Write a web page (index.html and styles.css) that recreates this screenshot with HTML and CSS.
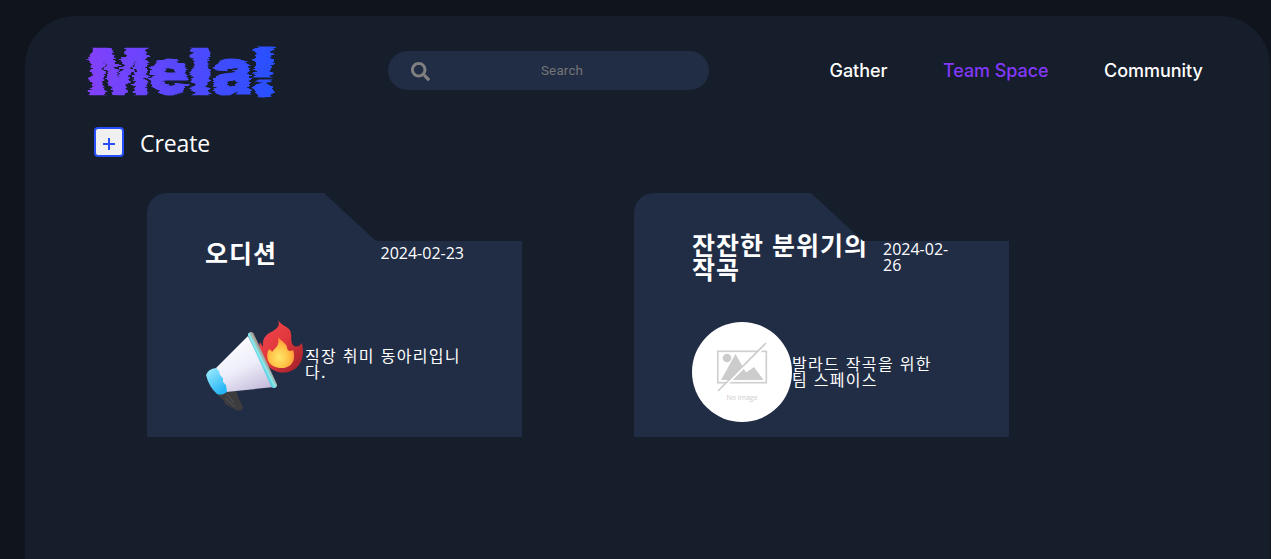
FILE: index.html
```html
<!DOCTYPE html>
<html lang="ko">
<head>
<meta charset="utf-8">
<title>Mela! Team Space</title>
<link rel="stylesheet" href="styles.css">
</head>
<body>
<main class="panel">
  <header class="header">
    <svg class="logo" viewBox="0 0 196 60" role="img" aria-label="Mela!">
      <defs>
        <linearGradient id="brand" gradientUnits="userSpaceOnUse" x1="5" y1="0" x2="190" y2="0">
          <stop offset="0" stop-color="#8540fb"/>
          <stop offset="1" stop-color="#2850ff"/>
        </linearGradient>
        <filter id="glitch" filterUnits="userSpaceOnUse" x="0" y="0" width="196" height="60" color-interpolation-filters="sRGB">
          <feTurbulence type="fractalNoise" baseFrequency="0.06 0.35" numOctaves="2" seed="3" result="n"/>
          <feColorMatrix in="n" type="matrix" values="1 0 0 0 0  0 0 0 0 0.5  0 0 0 0 0.5  0 0 0 0 1" result="m"/>
          <feDisplacementMap in="SourceGraphic" in2="m" scale="13" xChannelSelector="R" yChannelSelector="G"/>
        </filter>
      </defs>
      <g class="logo-text" filter="url(#glitch)">
        <text x="7" y="53.500" textLength="62" lengthAdjust="spacingAndGlyphs">M</text>
        <text class="round" x="68" y="53" textLength="40" lengthAdjust="spacingAndGlyphs">e</text>
        <text x="108" y="53.500" textLength="23" lengthAdjust="spacingAndGlyphs">l</text>
        <text class="round" x="131" y="53" textLength="41" lengthAdjust="spacingAndGlyphs">a</text>
        <text class="mark" x="169" y="53.500" textLength="27" lengthAdjust="spacingAndGlyphs">!</text>
      </g>
      <path class="logo-gap" d="M172 37.500H194"/>
    </svg>
    <div class="search">
      <svg class="search-icon" viewBox="0 0 512 512"><path d="M505 442.700 405.300 343c-4.500-4.500-10.600-7-17-7H372c27.600-35.300 44-79.700 44-128C416 93.100 322.900 0 208 0S0 93.100 0 208s93.100 208 208 208c48.300 0 92.700-16.400 128-44v16.300c0 6.400 2.500 12.500 7 17l99.700 99.700c9.400 9.400 24.600 9.400 33.900 0l28.300-28.300c9.400-9.400 9.400-24.600.1-34zM208 336c-70.700 0-128-57.200-128-128 0-70.700 57.200-128 128-128 70.700 0 128 57.200 128 128 0 70.700-57.200 128-128 128z"/></svg>
      <span class="search-label">Search</span>
    </div>
    <nav class="nav">
      <a>Gather</a>
      <a class="active">Team Space</a>
      <a>Community</a>
    </nav>
  </header>

  <div class="create">
    <button class="add" aria-label="Create"><svg viewBox="0 0 12 12"><path d="M6 0v12M0 6h12"/></svg></button>
    <span class="create-label">Create</span>
  </div>

  <section class="cards">
    <article class="card">
      <div class="card-head">
        <h2>오디션</h2>
        <time>2024-02-23</time>
      </div>
      <div class="card-body">
        <svg class="picture" viewBox="0 0 100 100">
          <defs>
            <linearGradient id="cone" x1="0.2" y1="0" x2="0.7" y2="1"><stop offset="0" stop-color="#fff"/><stop offset="0.55" stop-color="#eeeefa"/><stop offset="1" stop-color="#c6bddb"/></linearGradient>
            <linearGradient id="rim" gradientUnits="userSpaceOnUse" x1="54" y1="48" x2="60" y2="45"><stop offset="0" stop-color="#46c5dd"/><stop offset="0.5" stop-color="#8cebed"/><stop offset="1" stop-color="#a89a91"/></linearGradient>
            <linearGradient id="back" x1="0" y1="0" x2="0.6" y2="1"><stop offset="0" stop-color="#a5efff"/><stop offset="1" stop-color="#25b5f5"/></linearGradient>
            <linearGradient id="fire" x1="0" y1="0" x2="1" y2="1"><stop offset="0" stop-color="#f5464f"/><stop offset="0.5" stop-color="#df373c"/><stop offset="1" stop-color="#981e28"/></linearGradient>
            <radialGradient id="flame" cx="0.45" cy="0.65" r="0.6"><stop offset="0" stop-color="#ffe66a"/><stop offset="0.6" stop-color="#ffc044"/><stop offset="1" stop-color="#ff9139"/></radialGradient>
          </defs>
          <path fill="url(#fire)" d="M73 6C77 13 86 12 86 20C87 23 85 27 88 31C91 34 95 32 97 29C100 43 96 53 86 57C77 61 66 57 62 50L54 33L55 28L58 33C57 23 62 20 68 17C73 14 75 11 73 6Z"/>
          <path fill="url(#flame)" d="M73 23C76 27 81 29 82 33C82 37 85 38 88 36C91 44 88 54 77 54C66 54 60 47 63 37C64 34 66 36 67 38C70 34 75 32 73 23Z"/>
          <path fill="#3c3c3f" d="M12 80L31 76L34 85L38 93C38 96 35 98 31 96L20 90C20 86 16 85 12 80Z"/>
          <path stroke="#555458" stroke-width="1" d="M22 80L29 89M20 84L30 93"/>
          <path fill="url(#cone)" d="M11 54L43 22L69 73L21 78Z"/>
          <path fill="url(#back)" d="M1 61Q3 55 11 54L14 57L15 61L18 64L18 68L21 71L22 78Q17 82 12 80Q4 73 1 61Z"/>
          <path stroke="url(#rim)" stroke-width="6" stroke-linecap="round" d="M46 21L69 71"/>
        </svg>
        <p>직장 취미 동아리입니<br>다.</p>
      </div>
    </article>

    <article class="card card-long">
      <div class="card-head">
        <h2>잔잔한 분위기의<br>작곡</h2>
        <time>2024-02-<br>26</time>
      </div>
      <div class="card-body">
        <svg class="picture" viewBox="0 0 100 100">
          <circle cx="50" cy="50" r="50" fill="#fff"/>
          <rect x="25.800" y="29.300" width="48.500" height="31.400" fill="none" stroke="#d0d0d0" stroke-width="1.700"/>
          <circle cx="35" cy="36" r="4.300" fill="#ccc"/>
          <path fill="#ccc" d="M29 58L43.500 32L54 50.500L62 45L71.500 58Z"/>
          <path stroke="#fff" stroke-width="2.600" d="M26.800 70L75 22"/>
          <path stroke="#ccc" stroke-width="1.600" d="M26 69L74 21"/>
          <text class="no-image" x="50" y="78">No image</text>
        </svg>
        <p>발라드 작곡을 위한<br>팀 스페이스</p>
      </div>
    </article>
  </section>
</main>
</body>
</html>
```

FILE: styles.css
```css
* { box-sizing: border-box; }

body {
  margin: 0;
  height: 559px;
  padding: 16px 1px 0 25px;
  overflow: hidden;
  background: #10141c;
  color: #fff;
  font-family: "Open Sans", "Noto Sans CJK KR", sans-serif;
}

.panel {
  height: 543px;
  border-radius: 50px 50px 0 0;
  background: #161d2b;
}

.header {
  display: flex;
  align-items: center;
  height: 109px;
  padding-left: 56px;
}

.logo { width: 196px; height: 60px; }
.logo-text {
  fill: url(#brand);
  stroke: url(#brand);
  stroke-width: 0.5px;
  font: 900 64px Inter, sans-serif;
}
.logo-text .round { stroke-width: 1px; }
.logo-text .mark { stroke-width: 3px; }
.logo-gap { stroke: #161d2b; stroke-width: 2px; }

.search {
  display: flex;
  align-items: center;
  width: 321px;
  height: 39px;
  margin-left: 111px;
  padding-left: 23px;
  border-radius: 20px;
  background: #212d45;
  color: #757575;
  font: 13.33px Roboto, sans-serif;
}
.search-icon { width: 19px; height: 19px; fill: #808080; margin-top: 2px; }
.search-label { margin-left: 111px; margin-top: -1px; letter-spacing: 0.2px; }

.nav {
  display: flex;
  gap: 55.500px;
  margin-left: 120.500px;
  font: 500 18px Inter, sans-serif;
  letter-spacing: -0.05px;
  white-space: nowrap;
}
.nav .active { color: #8338fa; }

.create {
  display: flex;
  align-items: center;
  gap: 16px;
  height: 34px;
  margin-top: 1px;
  padding-left: 69px;
}
.add {
  display: grid;
  place-items: center;
  width: 30px;
  height: 30px;
  margin-top: -2px;
  padding: 0;
  border: 2px solid #284ffa;
  border-radius: 4px;
  background: #f0f0f0;
}
.add svg { width: 12px; height: 12px; margin-top: 3px; stroke: #284ffa; stroke-width: 2px; }
.create-label { font-size: 23px; line-height: 32px; letter-spacing: -0.1px; }

.cards {
  display: flex;
  gap: 112px;
  padding: 33px 0 0 122px;
}
.card {
  display: flex;
  flex-direction: column;
  gap: 49px;
  width: 375px;
  height: 244px;
  padding: 48px 58px 0;
  border-top-left-radius: 20px;
  background: #212d45;
  clip-path: polygon(0 0, 177px 0, 229px 48px, 100% 48px, 100% 100%, 0 100%);
}
.card-long { gap: 41px; padding-top: 40px; }

.card-head {
  display: flex;
  align-items: center;
  justify-content: space-between;
}
.card-head h2 {
  margin: -2px 0 0;
  font: 700 25px/24px "Noto Sans CJK KR", sans-serif;
  letter-spacing: 1px;
  white-space: nowrap;
}
.card-head time { font-size: 16px; line-height: 16px; letter-spacing: 0; }
.card-head { height: 24px; }
.card-long .card-head { height: 48px; }
.card-long time { width: 68px; white-space: nowrap; }

.card-body {
  display: flex;
  align-items: center;
}
.picture { flex: none; width: 100px; height: 100px; fill: none; }
.card-body p {
  margin: 0 0 2px;
  font: 16px/16px "Noto Sans CJK KR", sans-serif;
  letter-spacing: 1.300px;
  white-space: nowrap;
}
.picture .no-image {
  fill: #ccc;
  font: 7px "Open Sans", sans-serif;
  text-anchor: middle;
}
```
